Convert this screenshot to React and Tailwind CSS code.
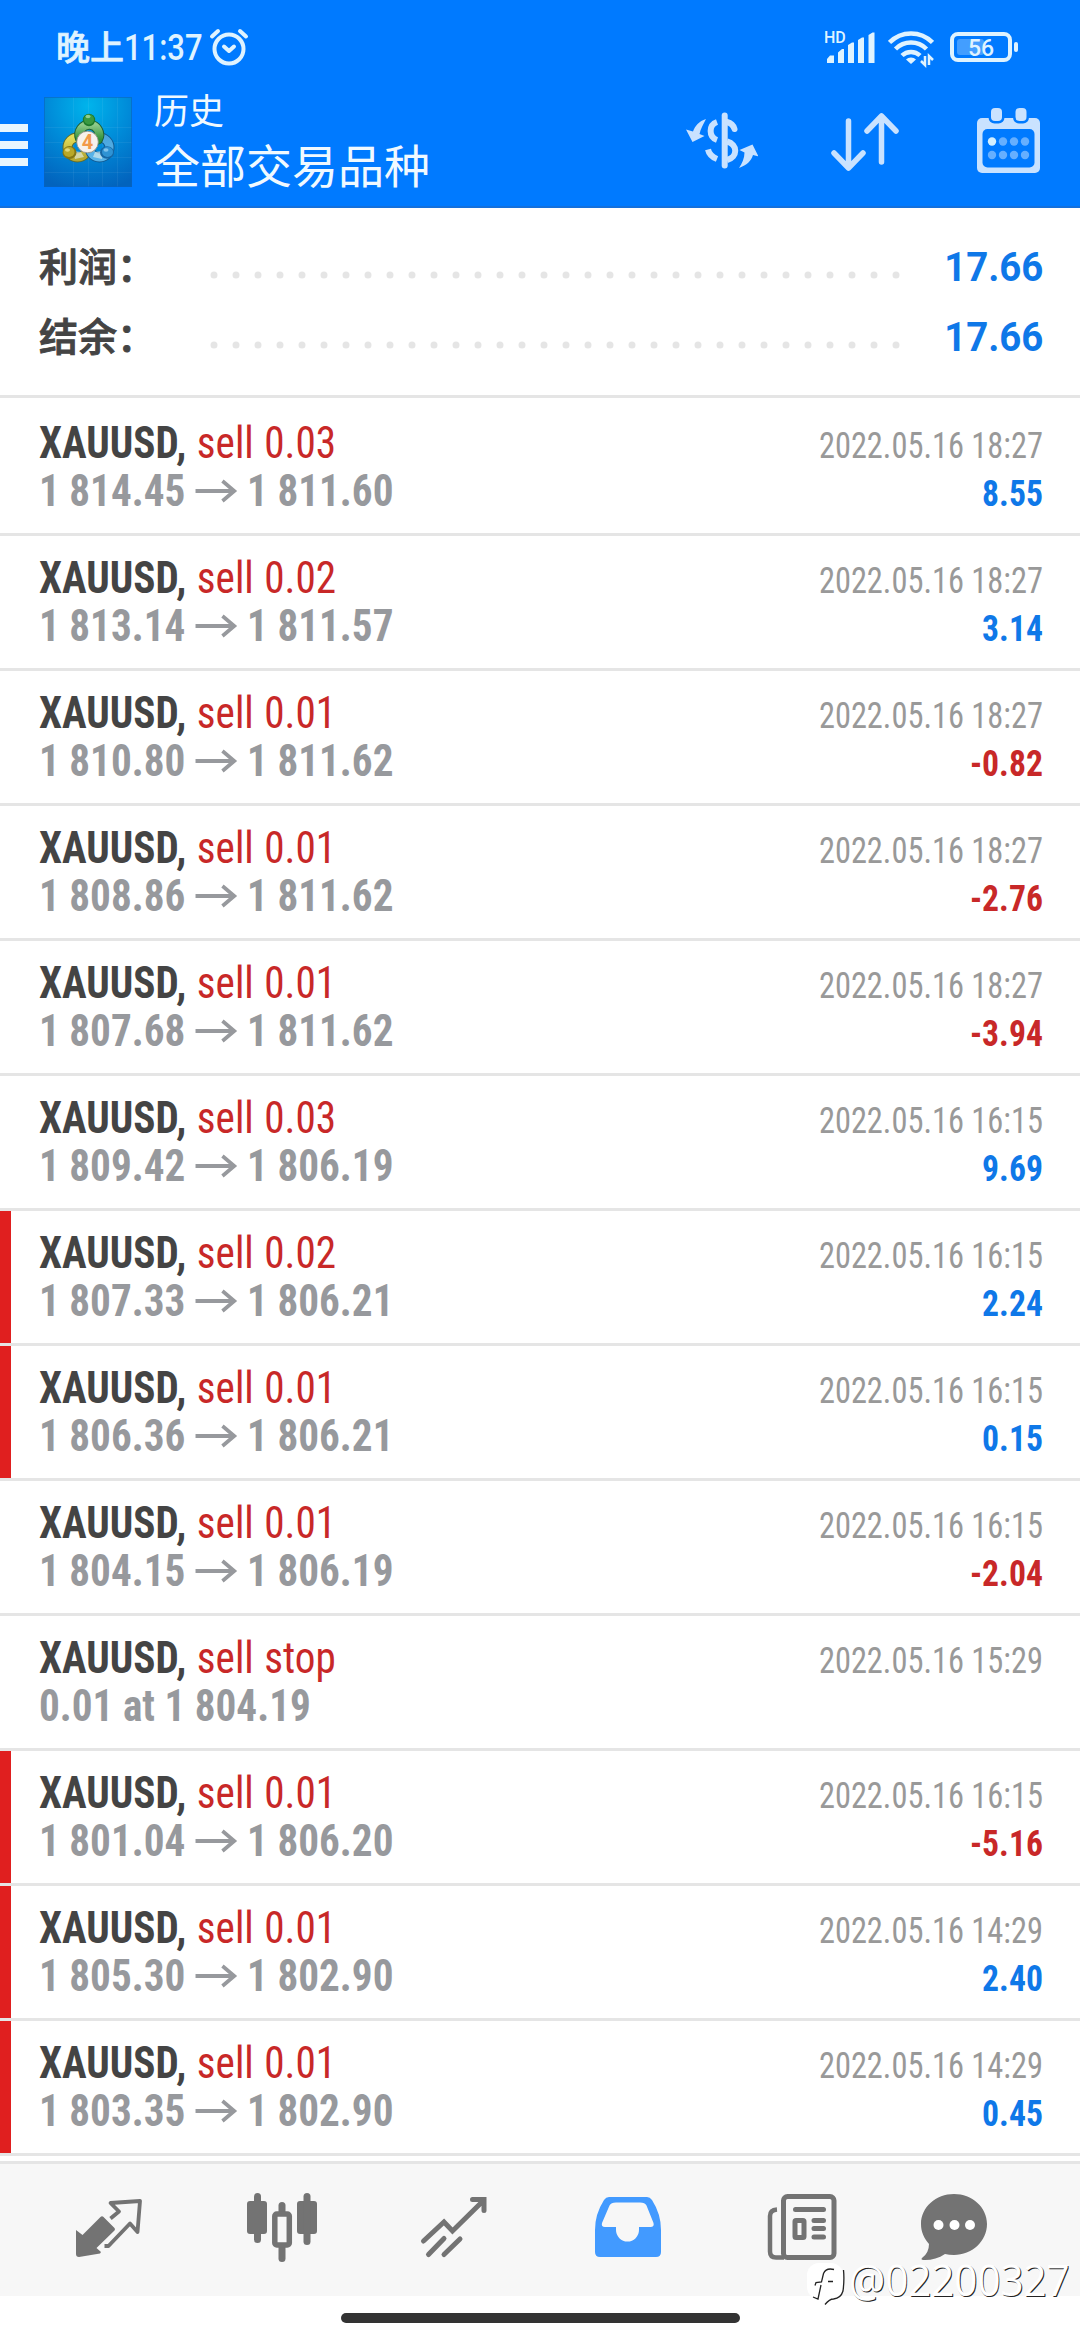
import React from 'react';

const deals = [
  { type: 'sell 0.03', open: '1 814.45', close: '1 811.60', time: '2022.05.16 18:27', profit: '8.55' },
  { type: 'sell 0.02', open: '1 813.14', close: '1 811.57', time: '2022.05.16 18:27', profit: '3.14' },
  { type: 'sell 0.01', open: '1 810.80', close: '1 811.62', time: '2022.05.16 18:27', profit: '-0.82' },
  { type: 'sell 0.01', open: '1 808.86', close: '1 811.62', time: '2022.05.16 18:27', profit: '-2.76' },
  { type: 'sell 0.01', open: '1 807.68', close: '1 811.62', time: '2022.05.16 18:27', profit: '-3.94' },
  { type: 'sell 0.03', open: '1 809.42', close: '1 806.19', time: '2022.05.16 16:15', profit: '9.69' },
  { type: 'sell 0.02', open: '1 807.33', close: '1 806.21', time: '2022.05.16 16:15', profit: '2.24', marked: true },
  { type: 'sell 0.01', open: '1 806.36', close: '1 806.21', time: '2022.05.16 16:15', profit: '0.15', marked: true },
  { type: 'sell 0.01', open: '1 804.15', close: '1 806.19', time: '2022.05.16 16:15', profit: '-2.04' },
  { type: 'sell stop', note: '0.01 at 1 804.19', time: '2022.05.16 15:29' },
  { type: 'sell 0.01', open: '1 801.04', close: '1 806.20', time: '2022.05.16 16:15', profit: '-5.16', marked: true },
  { type: 'sell 0.01', open: '1 805.30', close: '1 802.90', time: '2022.05.16 14:29', profit: '2.40', marked: true },
  { type: 'sell 0.01', open: '1 803.35', close: '1 802.90', time: '2022.05.16 14:29', profit: '0.45', marked: true },
];

const summary = [
  { label: '利润：', value: '17.66' },
  { label: '结余：', value: '17.66' },
];

const StatusBar = () => (
  <div className="h-[94px] pt-[28px] pl-[56px] pr-[63px] flex justify-between text-[#dff3ff]">
    <div className="flex h-[40px] items-center">
      <span className="text-[34px] leading-[40px] font-medium whitespace-nowrap [-webkit-text-stroke:0.7px]">晚上</span>
      <span className="text-[36px] leading-[40px] font-medium whitespace-nowrap w-[80px] origin-left scale-x-[0.86]">11:37</span>
      <svg width="40" height="40" viewBox="0 0 40 40" fill="none" stroke="currentColor" strokeWidth="4" strokeLinecap="round" strokeLinejoin="round" className="ml-[5px]">
        <circle cx="20" cy="21" r="14.5" />
        <path d="M15 18.500l5 4.500 5-4.500" />
        <path d="M3 8.500l6-5.500M31 3l6 5.500" />
      </svg>
    </div>
    <div className="flex h-[40px]">
      <svg width="50" height="40" viewBox="0 0 50 40" fill="currentColor">
        <text x="-1" y="14.500" fontSize="16" fontWeight="500">HD</text>
        <path d="M2 35v-4l3-3.500h4v7.500zM13 35v-10.500l4-3.500h2v14zM23 35v-18l4-2.500h2v20.500zM33 35v-23l4-2.500h2v25.500zM43.500 35v-28l4-2.500h2v30.500z" />
      </svg>
      <svg width="46" height="40" viewBox="0 0 46 40" fill="none" stroke="currentColor" strokeWidth="4.500" className="ml-[13px]">
        <path d="M1.500 14.500a30 30 0 0 1 43 0" />
        <path d="M7.500 21a22 22 0 0 1 31 0" />
        <path d="M14 27.500a13 13 0 0 1 18 0" />
        <path d="M23 36l-5-4.500a7 7 0 0 1 10 0z" fill="currentColor" stroke="none" />
        <path d="M37 28v9l-4-4M41 37v-9l4 4" strokeWidth="2.500" />
      </svg>
      <svg width="68" height="40" viewBox="0 0 68 40" fill="currentColor" className="ml-[16px] -mr-px">
        <rect x="2" y="6" width="58" height="26" rx="6" fill="none" stroke="currentColor" strokeWidth="4" />
        <rect x="7" y="11" width="27" height="16" rx="3" opacity="0.3" />
        <rect x="64" y="14" width="4" height="10" rx="2" />
        <text x="31" y="28" fontSize="23" fontWeight="500" textAnchor="middle">56</text>
      </svg>
    </div>
  </div>
);

const AppLogo = () => (
  <svg width="88" height="90" viewBox="0 0 88 90">
    <defs>
      <radialGradient id="logoBg" cx="0.5" cy="0.1" r="0.95">
        <stop offset="0" stopColor="#00b4ec" />
        <stop offset="0.500" stopColor="#008ad8" />
        <stop offset="1" stopColor="#0263bd" />
      </radialGradient>
      <linearGradient id="logoGreen" x1="0" y1="0" x2="0" y2="1">
        <stop offset="0" stopColor="#8fcb8a" />
        <stop offset="1" stopColor="#2f9038" />
      </linearGradient>
      <linearGradient id="logoYellow" x1="0" y1="0" x2="0" y2="1">
        <stop offset="0" stopColor="#e3dc58" />
        <stop offset="1" stopColor="#b5a832" />
      </linearGradient>
      <linearGradient id="logoBlue" x1="0" y1="0" x2="0" y2="1">
        <stop offset="0" stopColor="#4aa5dd" />
        <stop offset="1" stopColor="#5ab4e8" />
      </linearGradient>
    </defs>
    <rect width="88" height="90" fill="url(#logoBg)" />
    <path d="M29.500 0v90M44.500 0v90M58.500 0v90M73.500 0v90M0 30.500h88M0 45.500h88M0 60.500h88M0 75.500h88" stroke="#fff" strokeOpacity="0.06" />
    <rect x="0.500" y="0.500" width="87" height="89" fill="none" stroke="#0a63c0" strokeOpacity="0.600" />
    <g fill="none">
      <circle cx="33.500" cy="50.500" r="10" stroke="#5f6a28" strokeWidth="10" />
      <circle cx="33.500" cy="50.500" r="10" stroke="url(#logoYellow)" strokeWidth="8" />
      <circle cx="55.500" cy="50.500" r="10" stroke="#11588e" strokeWidth="10" />
      <circle cx="55.500" cy="50.500" r="10" stroke="url(#logoBlue)" strokeWidth="8" />
      <path d="M36 41.500a10 10 0 1 1 18 1" stroke="#1d5f35" strokeWidth="10" strokeLinecap="round" />
      <path d="M36 41.500a10 10 0 1 1 18 1" stroke="url(#logoGreen)" strokeWidth="8" strokeLinecap="round" />
    </g>
    <path d="M29 54l8 1 3 5-9 2zM59 54l-8 1-2 5 9 2z" fill="#e8f3ee" opacity="0.600" />
    <circle cx="45" cy="23" r="6.200" fill="#1e7a2c" />
    <circle cx="45" cy="22.500" r="5" fill="#3a9a41" />
    <ellipse cx="25.500" cy="55.500" rx="7" ry="6.500" fill="#837614" />
    <ellipse cx="25" cy="55" rx="5.500" ry="5" fill="#b9a828" />
    <ellipse cx="63" cy="55.500" rx="7" ry="6.200" fill="#1667a5" />
    <ellipse cx="63.500" cy="55" rx="5.500" ry="5" fill="#2f93d4" />
    <ellipse cx="44" cy="19.500" rx="2.500" ry="1.800" fill="#a5dba2" opacity="0.800" />
    <ellipse cx="23.500" cy="53" rx="2.500" ry="1.800" fill="#f2eda0" opacity="0.700" />
    <ellipse cx="62" cy="53" rx="2.500" ry="1.800" fill="#9fd6f5" opacity="0.700" />
    <circle cx="43.500" cy="45" r="10.800" fill="#f7f1ec" stroke="#8a8a80" strokeWidth="0.800" />
    <text x="43.500" y="52" textAnchor="middle" fontSize="20" fontWeight="700" fill="#f29a4a">4</text>
  </svg>
);

const Header = () => (
  <header className="h-[208px] bg-[#007aff] border-b-2 border-[#1470dc]">
    <StatusBar />
    <div className="flex h-[96px] pt-[3px]">
      <div className="w-[28px] mt-[27px] flex flex-col gap-[9px]">
        <div className="h-[8px] bg-[#e8f6ff]" />
        <div className="h-[8px] bg-[#e8f6ff]" />
        <div className="h-[8px] bg-[#e8f6ff]" />
      </div>
      <div className="ml-[16px]">
        <AppLogo />
      </div>
      <div className="ml-[22px] flex-1 text-[#f0f9ff]">
        <div className="text-[35px] leading-[35px] -mt-[2px]">历史</div>
        <div className="text-[46px] leading-[52px] mt-[11px]">全部交易品种</div>
      </div>
      <div className="flex text-[#c9e2ff]">
        <svg width="72" height="64" viewBox="0 0 72 64" fill="none" stroke="currentColor" strokeWidth="6" className="mt-[11px]">
          <path d="M38.700 7.500v50" strokeLinecap="round" />
          <path d="M31 14c-8.500 3-8.500 15 0 18M22 41.500c1 4.500 4 7.500 9 9.500" />
          <path d="M41 14c4 1 6.500 3.500 7.500 7" strokeLinecap="round" />
          <path d="M41 33.500c11 3 11 15.500 0 18.500" />
          <path d="M20 11c-7 2-11 7-13 12.500L0 21.500l6.500 12.500L18.500 28l-5-2c1-5 4-10 6.500-15zM53 60c8-3 12-7 14-13l5.500 1.500L66.500 36.500 53.500 42l5 2.500c0 6-2.500 11-5.500 15.500z" fill="currentColor" stroke="none" />
        </svg>
        <svg width="68" height="64" viewBox="0 0 68 64" fill="none" stroke="currentColor" strokeWidth="5.500" strokeLinecap="round" strokeLinejoin="round" className="ml-[73px] mt-[11px]">
          <path d="M17.500 13v47M3 45l14.500 15L32 45M50.500 54V8M36 23L50.500 8 65 23" />
        </svg>
        <svg width="64" height="68" viewBox="0 0 64 68" className="ml-[78px] mr-[39px] mt-[10px]">
          <rect x="0" y="11" width="63" height="55" rx="5" fill="currentColor" />
          <rect x="5.500" y="22" width="52" height="38.500" rx="5" fill="#007aff" />
          <rect x="11.500" y="-3" width="16" height="19.500" rx="6" fill="#007aff" />
          <rect x="36" y="-3" width="16" height="19.500" rx="6" fill="#007aff" />
          <rect x="14" y="1" width="11" height="13" rx="4" fill="currentColor" />
          <rect x="38.500" y="1" width="11" height="13" rx="4" fill="currentColor" />
          <circle cx="15" cy="34.500" r="4.200" fill="#d3efff" />
          <g fill="#66afff">
            <circle cx="26" cy="34.500" r="4.200" />
            <circle cx="37" cy="34.500" r="4.200" />
            <circle cx="48" cy="34.500" r="4.200" />
            <circle cx="15" cy="48" r="4.200" />
            <circle cx="26" cy="48" r="4.200" />
            <circle cx="37" cy="48" r="4.200" />
            <circle cx="48" cy="48" r="4.200" />
          </g>
        </svg>
      </div>
    </div>
  </header>
);

const Summary = () => (
  <section className="h-[190px] pt-[25px] pl-[39px] pr-[37px] border-b-[3px] border-[#e5e5e5]">
    {summary.map((row) => (
      <div key={row.label} className="flex h-[70px] items-center">
        <span className="w-[171px] text-[39px] leading-[70px] font-medium text-[#444] [-webkit-text-stroke:0.9px]">{row.label}</span>
        <svg width="692" height="8" viewBox="0 0 692 8" className="mt-[13px]">
          <path d="M4 4H692" stroke="#e5e5e5" strokeWidth="7" strokeLinecap="round" strokeDasharray="0 22" />
        </svg>
        <span className="ml-auto text-[40px] leading-[70px] font-bold text-[#0f78e8] origin-right scale-x-[0.96]">{row.value}</span>
      </div>
    ))}
  </section>
);

const Arrow = () => (
  <svg width="45" height="24" viewBox="0 0 45 24" fill="none" stroke="currentColor" strokeWidth="4" className="ml-[11px] mr-[10px]">
    <path d="M0 12h42M29 2L41.500 12 29 22" />
  </svg>
);

const DealRow = ({ deal }) => (
  <li className="h-[135px] flex border-b-[3px] border-[#e5e5e5]">
    <div className={`w-[11px] ${deal.marked ? 'bg-[#e01f1f]' : ''}`} />
    <div className="flex-1 ml-[28px] pt-[18px] origin-left scale-x-[0.936] font-['Roboto_Condensed',Roboto,sans-serif]">
      <div className="text-[44px] leading-[48px] whitespace-nowrap [word-spacing:1px]">
        <span className="font-bold text-[#444]">XAUUSD,</span>{' '}
        <span className="text-[#c82828]">{deal.type}</span>
      </div>
      <div className="flex items-center text-[44px] leading-[48px] font-bold text-[#97999d] whitespace-nowrap">
        {deal.note ? deal.note : (
          <>
            <span>{deal.open}</span>
            <Arrow />
            <span>{deal.close}</span>
          </>
        )}
      </div>
    </div>
    <div className="mr-[37px] pt-[21px] text-right text-[36px] leading-[48px] font-['Roboto_Condensed',Roboto,sans-serif]">
      <div className="text-[#999] origin-right scale-x-[0.9]">{deal.time}</div>
      {deal.profit && (
        <div className={`font-bold origin-right scale-x-[0.935] ${deal.profit.startsWith('-') ? 'text-[#c82828]' : 'text-[#0f78e8]'}`}>
          {deal.profit}
        </div>
      )}
    </div>
  </li>
);

const NavBar = () => (
  <nav className="h-[135px] pl-[21px] pt-[26px] flex bg-[#f7f7f7] border-t-[3px] border-[#e5e5e5] text-[#737373]">
    <div className="w-[174px] flex justify-center">
      <svg width="72" height="72" viewBox="0 0 72 72" fill="none" stroke="currentColor">
        <path d="M4 40l6.500 5L28.500 27q1.500-1.500 3 0L42.500 38q1 1 0 2.500L24.500 58l4.500 4-1 1.500L7 67q-3 0-3-3z" fill="currentColor" stroke="none" />
        <path d="M38.500 28.500l8.500-7L38.500 13 68 11 65.500 42l-7.500-8.500L36.500 56h-4" strokeWidth="3.800" strokeLinejoin="round" />
      </svg>
    </div>
    <div className="w-[173px] flex justify-center">
      <svg width="72" height="72" viewBox="0 0 72 72" fill="currentColor">
        <rect x="1" y="11" width="20" height="33" rx="3" />
        <rect x="8" y="3" width="7" height="50" rx="3.500" />
        <rect x="51" y="11" width="20" height="33" rx="3" />
        <rect x="57.500" y="3" width="7" height="52" rx="3.500" />
        <rect x="32.500" y="12" width="7" height="14" rx="3.500" />
        <rect x="32.500" y="54" width="7" height="18" rx="3.500" />
        <rect x="28.800" y="24" width="14.500" height="31" rx="2" fill="none" stroke="currentColor" strokeWidth="5.500" />
      </svg>
    </div>
    <div className="w-[173px] flex justify-center">
      <svg width="72" height="72" viewBox="0 0 72 72" fill="none" stroke="currentColor" strokeWidth="5" strokeLinecap="round">
        <path d="M4.500 51L25 32l8.500 9L65 10M53.500 9.500h11.500v11" />
        <path d="M9.500 64.500L25 48.500M25 64.500L41 49" />
      </svg>
    </div>
    <div className="w-[174px] flex justify-center">
      <svg width="72" height="72" viewBox="0 0 72 72">
        <path fillRule="evenodd" fill="#429aff" d="M17 7h38q3 0 5 3 9 14 9 30v22q0 5-5 5H8q-5 0-5-5V40q0-16 9-30 2-3 5-3zM24 12.500q-5 0-6.500 3L10 33q-1 4 3 4h11v3a11.500 11.500 0 0 0 23 0v-3h11.500q4 0 3-4L54.500 15.500q-1.500-3-6.500-3z" />
      </svg>
    </div>
    <div className="w-[173px] flex justify-center">
      <svg width="72" height="72" viewBox="0 0 72 72" fill="none" stroke="currentColor">
        <path d="M18 67.500H10q-6 0-6-6V26q0-6 7-6.500" strokeWidth="4.500" />
        <rect x="17.500" y="6.500" width="50.500" height="61" rx="4" strokeWidth="5" />
        <path d="M29.500 19.500h28M48 30.500h9.500M48 38.500h9.500M48 47h9.500" strokeWidth="5" strokeLinecap="round" />
        <rect x="29" y="30.500" width="9" height="17" rx="1" strokeWidth="5" />
      </svg>
    </div>
    <div className="w-[132px] flex justify-center">
      <svg width="72" height="72" viewBox="0 0 72 72">
        <path d="M36 4c18 0 33 13 33 30S54 65 36 65q-5 0-9-1c-6 4-13 6-20 6q-5 0-3-2 7-5 7-14C6 48 3 42 3 34 3 17 18 4 36 4z" fill="currentColor" />
        <circle cx="20.500" cy="35" r="5" fill="#fff" />
        <circle cx="36.500" cy="35" r="5" fill="#fff" />
        <circle cx="52" cy="35" r="5" fill="#fff" />
      </svg>
    </div>
  </nav>
);

const Watermark = () => (
  <div className="absolute left-[806px] top-[2260px] flex">
    <svg width="40" height="46" viewBox="0 0 40 46" fill="none" className="overflow-visible">
      <rect x="1" y="3" width="36" height="36" rx="12" fill="#fff" />
      <path d="M37.500 10q1 10-0.500 21-2 7-9.500 8-4 0-8.500 5.500" stroke="#222" strokeWidth="1.300" />
      <path d="M28 9.500q-8-2-10.500 4l-2 8.500-5.500 0.500-1 3M15 25l-3 14-5-2M22 21.500h5" stroke="#222" strokeWidth="1.300" />
    </svg>
    <span className="ml-[3px] -mt-[3px] origin-left scale-x-[0.938] font-['Open_Sans',sans-serif] text-[43px] leading-[46px] text-white [text-shadow:1px_1px_0_#222]">@02200327</span>
  </div>
);

const App = () => {
  return (
    <div className="relative w-[1080px] h-[2340px] overflow-hidden bg-white flex flex-col font-[Roboto,'Noto_Sans_CJK_SC',sans-serif]">
      <Header />
      <Summary />
      <ul className="pt-[3px] h-[1763px]">
        {deals.map((deal, i) => (
          <DealRow key={i} deal={deal} />
        ))}
      </ul>
      <NavBar />
      <div className="flex-1 pt-[17px] flex justify-center">
        <div className="w-[399px] h-[10px] rounded-full bg-[#333]" />
      </div>
      <Watermark />
    </div>
  );
};

export default App;
